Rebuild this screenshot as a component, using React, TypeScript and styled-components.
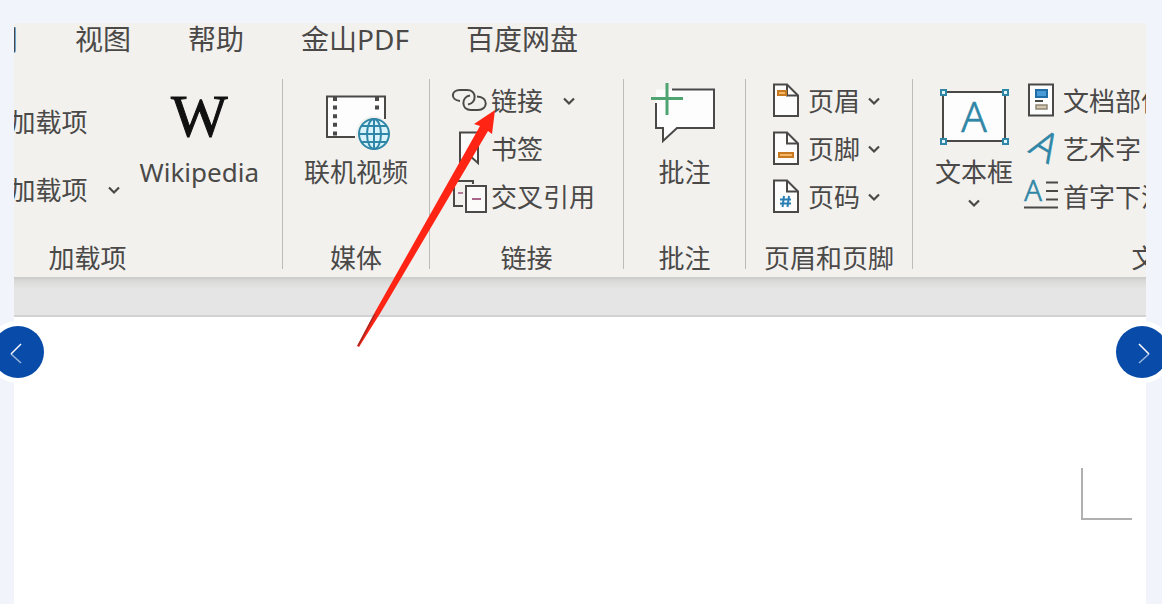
import React from "react";
import styled, { createGlobalStyle, css } from "styled-components";

const INK = "#4a4948";
const TEAL = "#2f86a6";

const GlobalStyle = createGlobalStyle`
  *, *::before, *::after { box-sizing: border-box; }
  body {
    margin: 0;
    background: #f1f5fb;
    color: ${INK};
    font-family: "Noto Sans", "Noto Sans CJK SC", sans-serif;
  }
  button {
    margin: 0;
    padding: 0;
    border: 0;
    background: none;
    color: inherit;
    font: inherit;
    white-space: nowrap;
    cursor: pointer;
  }
`;

const Carousel = styled.main`
  position: relative;
  display: flex;
  min-height: 100vh;
  padding: 23px 16px 0 14px;
  overflow: hidden;
`;

const Slide = styled.section`
  display: flex;
  flex: 1;
  flex-direction: column;
  min-width: 0;
  overflow: hidden;
  background: #fff;
`;

const Ribbon = styled.header`
  padding-bottom: 8px;
  background: #f2f1ee;
`;

const Tabs = styled.nav`
  display: flex;
  gap: 57px;
  margin: 0 0 24px -52px;
`;

const Tab = styled.button`
  flex: none;
  font-size: 28px;
  line-height: 32px;
`;

const Groups = styled.div`
  display: flex;
  height: 190px;
  margin-left: -121px;
`;

const Group = styled.section<{ $width: number }>`
  display: flex;
  flex: none;
  flex-direction: column;
  width: ${(p) => p.$width}px;
  border-right: 1px solid #bdbcba;
  font-size: 26px;
`;

const GroupBody = styled.div<{ $align?: string; $indent?: number; $gap?: number; $outdent?: number }>`
  display: flex;
  flex: 1;
  justify-content: ${(p) => p.$align ?? "flex-start"};
  gap: ${(p) => p.$gap ?? 0}px;
  padding-left: ${(p) => p.$indent ?? 0}px;
  padding-right: ${(p) => p.$outdent ?? 0}px;
`;

const GroupName = styled.h2`
  margin: 0;
  font-size: 26px;
  font-weight: 400;
  line-height: 22px;
  text-align: center;
`;

const Stack = styled.div<{ $loose?: boolean }>`
  display: flex;
  flex-direction: column;
  align-items: flex-start;
  gap: 4px;
  ${(p) =>
    p.$loose &&
    css`
      gap: 24px;
      padding-top: 21px;
    `}
`;

const SmallButton = styled.button<{ $gap?: number }>`
  display: flex;
  align-items: center;
  gap: ${(p) => p.$gap ?? 4}px;
  height: 44px;
  line-height: 44px;
`;

const ArrowSlot = styled.span`
  display: flex;
  padding-left: 16px;
`;

const BigButton = styled.button`
  display: flex;
  flex-direction: column;
  align-items: center;
  line-height: 30px;
`;

const BigIcon = styled.svg`
  display: block;
  width: 80px;
  height: 78px;
`;

const Wordmark = styled.span`
  height: 78px;
  color: #111;
  font-family: "Liberation Serif", serif;
  font-size: 60px;
  line-height: 74px;
  -webkit-text-stroke: 1px #111;
`;

const Below = styled.span`
  display: flex;
  padding-top: 10px;
`;

const Desk = styled.div`
  height: 40px;
  border-bottom: 2px solid #d2d2d2;
  background: linear-gradient(#cbcbc9, #dcdcda 5px, #e5e5e5 12px);
`;

const Paper = styled.div`
  display: flex;
  flex: 1;
  justify-content: flex-end;
  padding: 151px 14px 0 0;
`;

const MarginMark = styled.div`
  width: 51px;
  height: 52px;
  border: solid #b0b0b0;
  border-width: 0 0 2px 2px;
`;

const Pointer = styled.svg`
  position: absolute;
  top: 107px;
  left: 355px;
  width: 145px;
  height: 242px;
  pointer-events: none;
`;

const NavButton = styled.button<{ $side: "left" | "right" }>`
  position: absolute;
  top: 326px;
  ${(p) => (p.$side === "left" ? "left: -8px;" : "right: -6px;")}
  display: flex;
  align-items: center;
  justify-content: center;
  width: 52px;
  height: 52px;
  border-radius: 50%;
  background: #084ba8;
  box-shadow: 0 0 0 5px #fff;
`;

const Chevron = () => (
  <svg width="12" height="12" viewBox="0 0 12 12" fill="none" stroke={INK} strokeWidth="2.2" aria-hidden="true">
    <path d="M1 3.5 6 8.500 11 3.500" />
  </svg>
);

const Small = ({ children, width = 36 }: { children: React.ReactNode; width?: number }) => (
  <svg width={width} height="36" viewBox={`0 0 ${width} 36`} fill="none" stroke={INK} strokeWidth="2" aria-hidden="true">
    {children}
  </svg>
);

const LinkIcon = () => (
  <Small>
    <path d="M9 18C-1 17 0 7 9 7H16C26 7 26 20 17 21.500" />
    <path d="M26 13.500C38 14 37 27 27 27H20C10 27 10 14 19 12.500" />
  </Small>
);

const BookmarkIcon = () => (
  <Small>
    <path d="M9 1.500H27V32L18 24 9 32Z" fill="#fbfbfa" />
  </Small>
);

const CrossRefIcon = () => (
  <Small>
    <path d="M12 27H3V2H22V5" />
    <path d="M7 14H12" stroke="#b57a9c" />
    <path d="M15 7H35V33H15Z" fill="#fbfbfa" />
    <path d="M21 20H30" stroke="#a8668b" />
  </Small>
);

const PageIcon = ({ children }: { children: React.ReactNode }) => (
  <Small width={28}>
    <path d="M2 1.500H15L26 12.500V33H2Z" fill="#fdfdfd" />
    <path d="M15 1.500V12.500H26" />
    {children}
  </Small>
);

const PartsIcon = () => (
  <Small>
    <path d="M6 1.500H30V32.500H6Z" fill="#fdfdfd" />
    <path d="M13 7H24V14H13Z" fill="#4b9ad8" stroke="#1f6ca6" />
    <path d="M12 18H20" />
    <path d="M13 22H24V26H13Z" fill="#d3c7ae" stroke="#8d8676" strokeWidth="1.500" />
  </Small>
);

const Letter = styled.text`
  fill: ${TEAL};
  stroke: ${TEAL};
  font-family: "Noto Sans", sans-serif;
  font-weight: 300;
  text-anchor: middle;
`;

const WordArtIcon = () => (
  <Small>
    <Letter x="0" y="0" fontSize="40" strokeWidth="0.6" transform="translate(15 27) rotate(31)">A</Letter>
  </Small>
);

const DropCapIcon = () => (
  <Small>
    <Letter x="10" y="22" fontSize="29" strokeWidth="0.6">A</Letter>
    <path d="M23 3.500H35M23 12H35M23 20.500H35M1 28.500H35" />
  </Small>
);

const VideoIcon = () => (
  <BigIcon viewBox="0 0 80 78" fill="none" stroke={INK} strokeWidth="2" aria-hidden="true">
    <path d="M11 17.500H69V58H11Z" fill="#fdfdfd" stroke="none" />
    <path d="M39 58H11V17.500H69V40" />
    <path d="M19 18v41M61 18v15" strokeWidth="4" strokeDasharray="4 4.600" />
    <circle cx="58" cy="55" r="18" fill="#f2f1ee" stroke="none" />
    <g stroke={TEAL}>
      <circle cx="58" cy="55" r="15" fill="#d8f3fb" />
      <ellipse cx="58" cy="55" rx="7" ry="15" />
      <path d="M58 40V70M43 55H73M46 47H70M46 63H70" />
    </g>
  </BigIcon>
);

const CommentIcon = () => (
  <BigIcon viewBox="0 0 80 78" fill="none" stroke={INK} strokeWidth="2" aria-hidden="true">
    <path d="M11 10.500H69V49H32L18 62V49H11Z" fill="#fdfdfd" stroke="none" />
    <path d="M27 10.500H69V49H32L18 62V49H11V24" />
    <path d="M22 4V36M6 19.500H38" stroke="#4fa572" strokeWidth="3" />
  </BigIcon>
);

const TextBoxIcon = () => (
  <BigIcon viewBox="0 0 80 78" fill="none" stroke={INK} strokeWidth="2" aria-hidden="true">
    <path d="M9 13H71V62H9Z" fill="#fdfdfd" />
    <path d="M7 11h5v5h-5zM69 11h5v5h-5zM7 60h5v5h-5zM69 60h5v5h-5z" fill="#e4f6fb" stroke={TEAL} />
    <Letter x="40" y="53" fontSize="42" strokeWidth="0.6">A</Letter>
  </BigIcon>
);

export default function App() {
  return (
    <>
      <GlobalStyle />
      <Carousel>
        <Slide>
          <Ribbon>
            <Tabs>
              {["审阅", "视图", "帮助", "金山PDF", "百度网盘"].map((name) => (
                <Tab key={name}>{name}</Tab>
              ))}
            </Tabs>
            <Groups>
              <Group $width={390}>
                <GroupBody $align="flex-end" $gap={20} $outdent={23}>
                  <Stack $loose>
                    <SmallButton>加载项</SmallButton>
                    <SmallButton>
                      加载项
                      <ArrowSlot>
                        <Chevron />
                      </ArrowSlot>
                    </SmallButton>
                  </Stack>
                  <BigButton>
                    <Wordmark aria-hidden="true">W</Wordmark>
                    Wikipedia
                  </BigButton>
                </GroupBody>
                <GroupName>加载项</GroupName>
              </Group>

              <Group $width={147}>
                <GroupBody $align="center">
                  <BigButton>
                    <VideoIcon />
                    联机视频
                  </BigButton>
                </GroupBody>
                <GroupName>媒体</GroupName>
              </Group>

              <Group $width={194}>
                <GroupBody $indent={21}>
                  <Stack>
                    <SmallButton>
                      <LinkIcon />
                      链接
                      <ArrowSlot>
                        <Chevron />
                      </ArrowSlot>
                    </SmallButton>
                    <SmallButton>
                      <BookmarkIcon />
                      书签
                    </SmallButton>
                    <SmallButton>
                      <CrossRefIcon />
                      交叉引用
                    </SmallButton>
                  </Stack>
                </GroupBody>
                <GroupName>链接</GroupName>
              </Group>

              <Group $width={122}>
                <GroupBody $align="center">
                  <BigButton>
                    <CommentIcon />
                    批注
                  </BigButton>
                </GroupBody>
                <GroupName>批注</GroupName>
              </Group>

              <Group $width={167}>
                <GroupBody $indent={26}>
                  <Stack>
                    <SmallButton $gap={8}>
                      <PageIcon>
                        <path d="M6 8H14V12H6Z" fill="#f4b768" stroke="#c9791f" />
                      </PageIcon>
                      页眉
                      <Chevron />
                    </SmallButton>
                    <SmallButton $gap={8}>
                      <PageIcon>
                        <path d="M7 22H21V26H7Z" fill="#f4b768" stroke="#c9791f" />
                      </PageIcon>
                      页脚
                      <Chevron />
                    </SmallButton>
                    <SmallButton $gap={8}>
                      <PageIcon>
                        <path d="M12 17 10.500 28M17 17 15.500 28M8 20.500H19M8 24.500H19" stroke="#2b7fb5" />
                      </PageIcon>
                      页码
                      <Chevron />
                    </SmallButton>
                  </Stack>
                </GroupBody>
                <GroupName>页眉和页脚</GroupName>
              </Group>

              <Group $width={490}>
                <GroupBody $indent={21} $gap={9}>
                  <BigButton>
                    <TextBoxIcon />
                    文本框
                    <Below>
                      <Chevron />
                    </Below>
                  </BigButton>
                  <Stack>
                    <SmallButton>
                      <PartsIcon />
                      文档部件
                    </SmallButton>
                    <SmallButton>
                      <WordArtIcon />
                      艺术字
                    </SmallButton>
                    <SmallButton>
                      <DropCapIcon />
                      首字下沉
                    </SmallButton>
                  </Stack>
                </GroupBody>
                <GroupName>文本</GroupName>
              </Group>
            </Groups>
          </Ribbon>
          <Desk />
          <Paper>
            <MarginMark />
          </Paper>
        </Slide>

        <Pointer viewBox="355 107 145 242" aria-hidden="true">
          <path d="M495 110 474 124 480 126 375 312 357 346 359 347 381 312 488 131 492 134Z" fill="#ff2414" />
          <path d="M375 314 358 346" stroke="#a02a24" strokeWidth="1.500" />
        </Pointer>

        <NavButton $side="left" aria-label="Previous">
          <svg width="16" height="24" viewBox="0 0 16 24" fill="none" stroke="#fff" strokeWidth="1.500">
            <path d="M11 4 1 14" />
            <path d="M1 14 11 23" opacity="0.6" />
          </svg>
        </NavButton>
        <NavButton $side="right" aria-label="Next">
          <svg width="16" height="24" viewBox="0 0 16 24" fill="none" stroke="#fff" strokeWidth="1.500">
            <path d="M5 4 15 14" />
            <path d="M15 14 5 23" opacity="0.6" />
          </svg>
        </NavButton>
      </Carousel>
    </>
  );
}
